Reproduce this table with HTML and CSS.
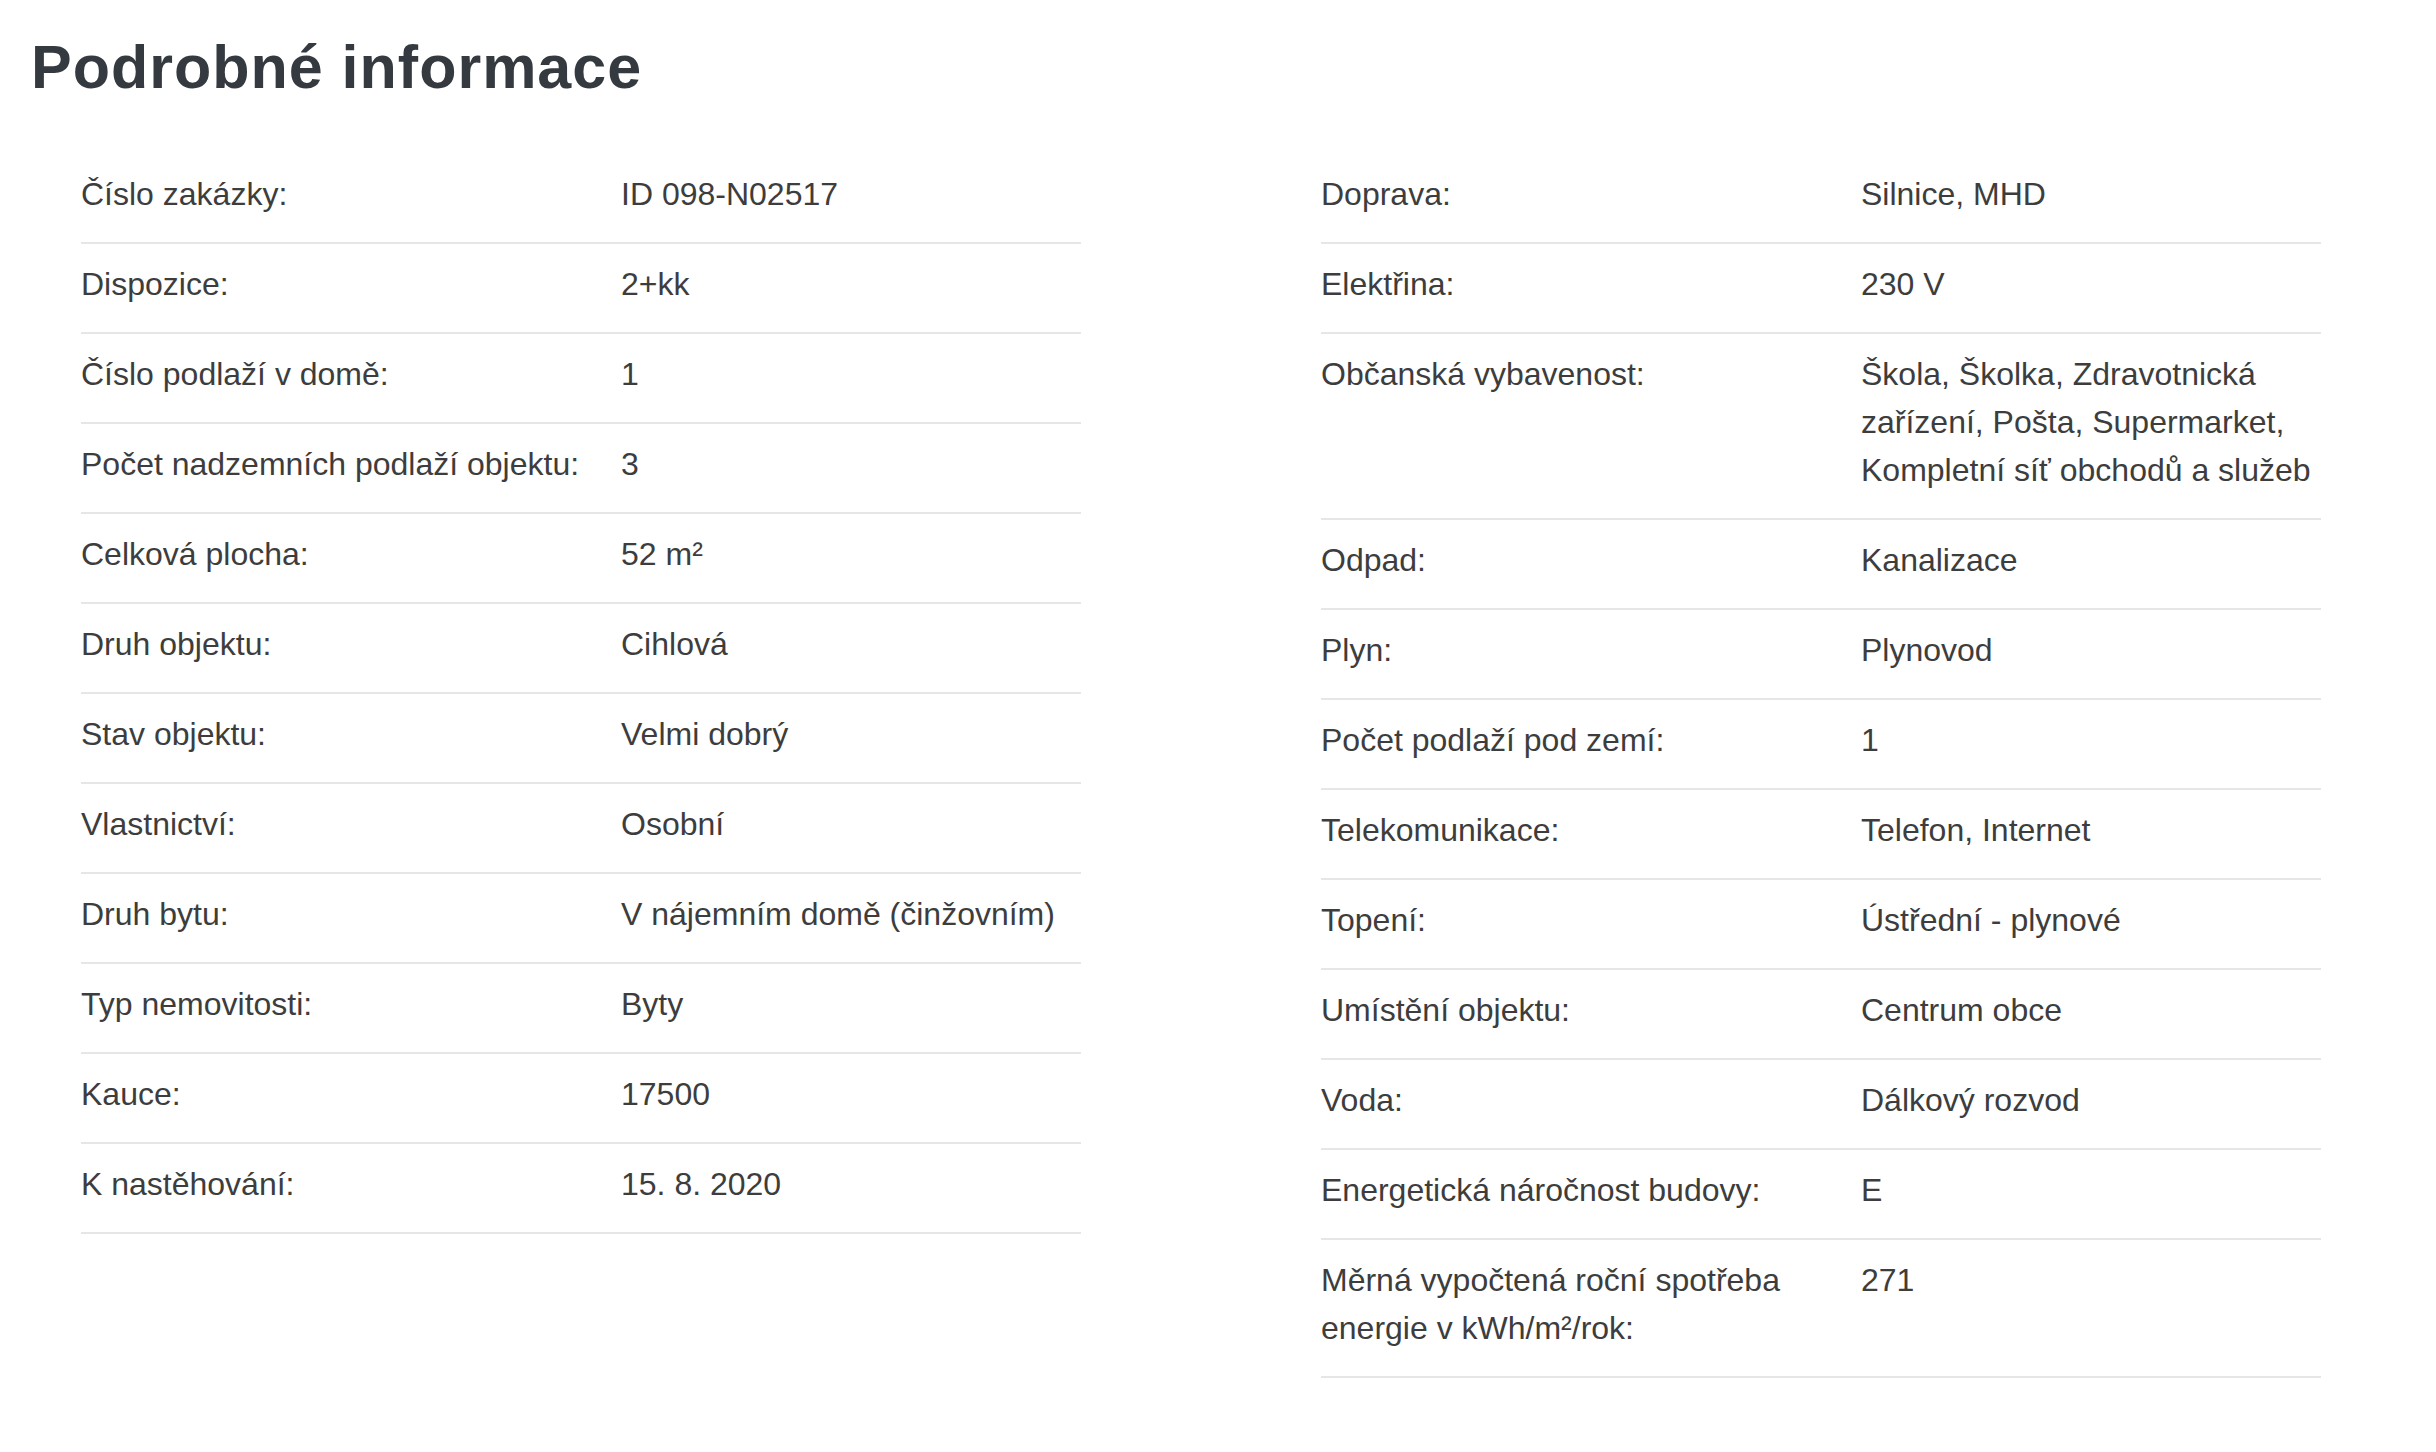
FILE: index.html
```html
<!DOCTYPE html>
<html lang="cs">
<head>
<meta charset="utf-8">
<title>Podrobné informace</title>
<link rel="stylesheet" href="styles.css">
</head>
<body>
<main class="page">
  <h1 class="title">Podrobné informace</h1>
  <div class="columns">
    <dl class="list">
      <div class="row"><dt>Číslo zakázky:</dt><dd>ID 098-N02517</dd></div>
      <div class="row"><dt>Dispozice:</dt><dd>2+kk</dd></div>
      <div class="row"><dt>Číslo podlaží v domě:</dt><dd>1</dd></div>
      <div class="row"><dt>Počet nadzemních podlaží objektu:</dt><dd>3</dd></div>
      <div class="row"><dt>Celková plocha:</dt><dd>52 m²</dd></div>
      <div class="row"><dt>Druh objektu:</dt><dd>Cihlová</dd></div>
      <div class="row"><dt>Stav objektu:</dt><dd>Velmi dobrý</dd></div>
      <div class="row"><dt>Vlastnictví:</dt><dd>Osobní</dd></div>
      <div class="row"><dt>Druh bytu:</dt><dd>V nájemním domě (činžovním)</dd></div>
      <div class="row"><dt>Typ nemovitosti:</dt><dd>Byty</dd></div>
      <div class="row"><dt>Kauce:</dt><dd>17500</dd></div>
      <div class="row"><dt>K nastěhování:</dt><dd>15. 8. 2020</dd></div>
    </dl>
    <dl class="list">
      <div class="row"><dt>Doprava:</dt><dd>Silnice, MHD</dd></div>
      <div class="row"><dt>Elektřina:</dt><dd>230 V</dd></div>
      <div class="row"><dt>Občanská vybavenost:</dt><dd>Škola, Školka, Zdravotnická zařízení, Pošta, Supermarket, Kompletní síť obchodů a služeb</dd></div>
      <div class="row"><dt>Odpad:</dt><dd>Kanalizace</dd></div>
      <div class="row"><dt>Plyn:</dt><dd>Plynovod</dd></div>
      <div class="row"><dt>Počet podlaží pod zemí:</dt><dd>1</dd></div>
      <div class="row"><dt>Telekomunikace:</dt><dd>Telefon, Internet</dd></div>
      <div class="row"><dt>Topení:</dt><dd>Ústřední - plynové</dd></div>
      <div class="row"><dt>Umístění objektu:</dt><dd>Centrum obce</dd></div>
      <div class="row"><dt>Voda:</dt><dd>Dálkový rozvod</dd></div>
      <div class="row"><dt>Energetická náročnost budovy:</dt><dd>E</dd></div>
      <div class="row"><dt>Měrná vypočtená roční spotřeba energie v kWh/m²/rok:</dt><dd>271</dd></div>
    </dl>
  </div>
</main>
</body>
</html>
```

FILE: styles.css
```css
html, body {
  margin: 0;
  padding: 0;
  background: #ffffff;
}

body {
  font-family: "Liberation Sans", Arial, Helvetica, sans-serif;
  color: #3d3d3d;
}

.page {
  padding: 31px 0 0 31px;
}

.title {
  margin: 0;
  font-size: 61px;
  line-height: 72px;
  font-weight: 700;
  color: #343a40;
  letter-spacing: 1px;
}

.columns {
  display: flex;
  align-items: flex-start;
  gap: 240px;
  margin: 51px 0 0 50px;
}

.list {
  width: 1000px;
  margin: 0;
}

.row {
  display: grid;
  grid-template-columns: 540px 1fr;
  padding: 16px 0 24px;
  border-bottom: 2px solid #e6e6e6;
  font-size: 32px;
  line-height: 48px;
}

.row dt {
  padding-right: 20px;
}

.row dd {
  margin: 0;
}
```
